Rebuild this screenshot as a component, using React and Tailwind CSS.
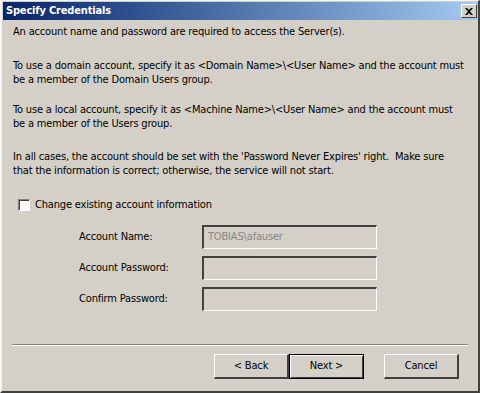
import React from 'react';

const font = { fontFamily: '"DejaVu Sans Condensed", "Liberation Sans", sans-serif' };

const Field = ({ label, value }) => (
  <div className="flex items-center h-[24px] shrink-0">
    <div className="w-[200px] pl-[77px] whitespace-nowrap">{label}</div>
    <div className="w-[175px] h-[24px] border-t-2 border-l-2 border-t-[#404040] border-l-[#404040] border-b border-r border-b-white border-r-white bg-[#d4d0c8] pl-[4px] flex items-center text-[#8a8883]">
      {value}
    </div>
  </div>
);

const Btn = ({ children, def }) => (
  <button
    className={`w-[75px] h-[25px] bg-[#d4d0c8] flex items-center justify-center ${
      def
        ? 'border border-black shadow-[inset_1px_1px_0_#fff,inset_-1px_-1px_0_#404040]'
        : 'border-t border-l border-t-white border-l-white border-b-2 border-r-2 border-b-[#404040] border-r-[#404040]'
    }`}
  >
    {children}
  </button>
);

export default function App() {
  return (
    <div
      className="w-[480px] h-[393px] bg-[#d4d0c8] text-[11px] tracking-[-0.17px] text-black border-l-2 border-t border-r-2 border-b-2 border-l-[#f4f4f0] border-t-[#f4f4f0] border-r-[#404040] border-b-[#404040] flex flex-col overflow-hidden"
      style={font}
    >
      {/* Title bar */}
      <div className="h-[18px] shrink-0 mt-[1px] ml-[1px] bg-gradient-to-r from-[#0a246a] to-[#a6caf0] flex items-center justify-between pl-[3px] pr-[1px]">
        <span className="text-white font-bold text-[11px]">Specify Credentials</span>
        <span className="w-[16px] h-[14px] bg-[#d4d0c8] border-t border-l border-white border-b border-r border-b-[#404040] border-r-[#404040] flex items-center justify-center">
          <svg width="8" height="7" viewBox="0 0 8 7">
            <path d="M0 0h2l2 2 2-2h2L5 3.5 8 7H6L4 5 2 7H0l3-3.5z" fill="#000" />
          </svg>
        </span>
      </div>

      {/* Body text */}
      <div className="px-[11px] pt-[5px] leading-[14px] whitespace-nowrap flex flex-col shrink-0">
        <p>An account name and password are required to access the Server(s).</p>
        <p className="mt-[20px]">
          To use a domain account, specify it as &lt;Domain Name&gt;\&lt;User Name&gt; and the account must
          <br />be a member of the Domain Users group.
        </p>
        <p className="mt-[16px]">
          To use a local account, specify it as &lt;Machine Name&gt;\&lt;User Name&gt; and the account must
          <br />be a member of the Users group.
        </p>
        <p className="mt-[19px]">
          In all cases, the account should be set with the 'Password Never Expires' right.&nbsp; Make sure
          <br />that the information is correct; otherwise, the service will not start.
        </p>
      </div>

      {/* Checkbox */}
      <label className="flex items-center h-[14px] shrink-0 mt-[20px] pl-[16px]">
        <span className="w-[12px] h-[12px] bg-white border-t border-l border-t-[#808080] border-l-[#808080] border-b border-r border-b-white border-r-white shadow-[inset_1px_1px_0_#404040]" />
        <span className="ml-[5px]">Change existing account information</span>
      </label>

      {/* Fields */}
      <div className="mt-[13px] flex flex-col gap-[7px] shrink-0">
        <Field label="Account Name:" value="TOBIAS\afauser" />
        <Field label="Account Password:" value="" />
        <Field label="Confirm Password:" value="" />
      </div>

      {/* Separator */}
      <div className="mt-[33px] mx-[10px] shrink-0 border-t border-t-[#808080] border-b border-b-white" />

      {/* Buttons */}
      <div className="mt-[8px] flex justify-end pr-[19px] shrink-0">
        <Btn>&lt; Back</Btn>
        <Btn def>Next &gt;</Btn>
        <div className="w-[20px]" />
        <Btn>Cancel</Btn>
      </div>
    </div>
  );
}
